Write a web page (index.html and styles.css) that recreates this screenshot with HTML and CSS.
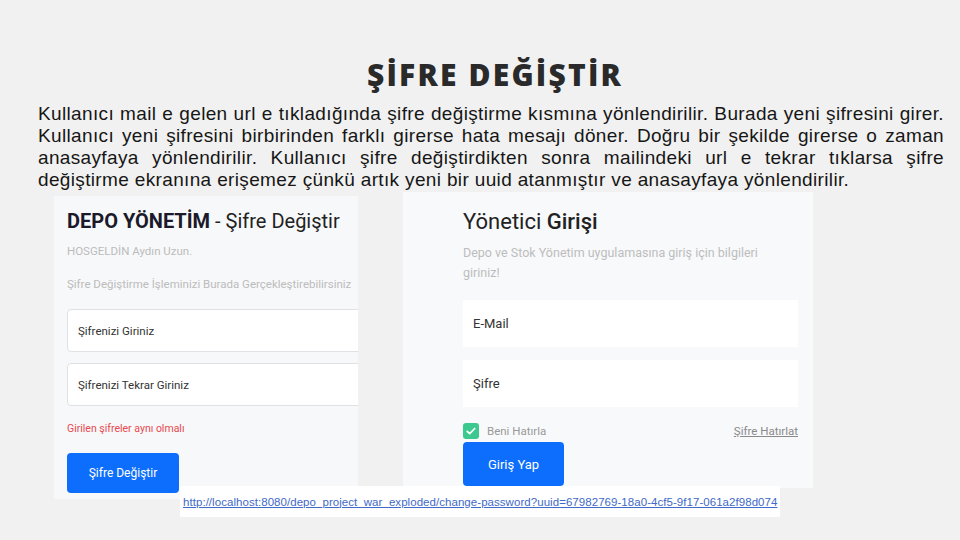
FILE: index.html
```html
<!DOCTYPE html>
<html lang="tr">
<head>
<meta charset="utf-8">
<link rel="stylesheet" href="styles.css">
</head>
<body>
<div class="slide">
  <h1 class="title">ŞİFRE DEĞİŞTİR</h1>
  <p class="desc">Kullanıcı mail e gelen url e tıkladığında şifre değiştirme kısmına yönlendirilir. Burada yeni şifresini girer. Kullanıcı yeni şifresini birbirinden farklı girerse hata mesajı döner. Doğru bir şekilde girerse o zaman anasayfaya yönlendirilir. Kullanıcı şifre değiştirdikten sonra mailindeki url e tekrar tıklarsa şifre değiştirme ekranına erişemez çünkü artık yeni bir uuid atanmıştır ve anasayfaya yönlendirilir.</p>
  <div class="shots">
    <div class="panel panel-left">
      <div class="pl-title"><b>DEPO YÖNETİM</b> - Şifre Değiştir</div>
      <div class="pl-muted pl-hello">HOSGELDİN Aydın Uzun.</div>
      <div class="pl-muted pl-info">Şifre Değiştirme İşleminizi Burada Gerçekleştirebilirsiniz</div>
      <div class="pl-input pl-input1">Şifrenizi Giriniz</div>
      <div class="pl-input pl-input2">Şifrenizi Tekrar Giriniz</div>
      <div class="pl-error">Girilen şifreler aynı olmalı</div>
      <div class="btn pl-btn">Şifre Değiştir</div>
    </div>
    <div class="panel panel-right">
      <div class="pr-title">Yönetici <b>Girişi</b></div>
      <div class="pr-sub">Depo ve Stok Yönetim uygulamasına giriş için bilgileri giriniz!</div>
      <div class="pr-input pr-input1">E-Mail</div>
      <div class="pr-input pr-input2">Şifre</div>
      <div class="pr-row">
        <span class="check"><svg width="16" height="16" viewBox="0 0 16 16"><rect width="16" height="16" rx="3" fill="#3cc98f"/><path d="M4.2 8.3l2.5 2.4 5-5.2" fill="none" stroke="#fff" stroke-width="1.7" stroke-linecap="round" stroke-linejoin="round"/></svg></span>
        <span class="remember">Beni Hatırla</span>
        <span class="forgot">Şifre Hatırlat</span>
      </div>
      <div class="btn pr-btn">Giriş Yap</div>
    </div>
    <div class="url"><span>http://localhost:8080/depo_project_war_exploded/change-password?uuid=67982769-18a0-4cf5-9f17-061a2f98d074</span></div>
  </div>
</div>
</body>
</html>
```
FILE: styles.css
```css
html, body { margin: 0; padding: 0; }
body { background: #f1f1f1; }
.slide {
  width: 960px;
  height: 540px;
  overflow: hidden;
  position: relative;
}
.title {
  margin: 0 0 9px;
  padding-top: 56px;
  padding-left: 30px;
  text-align: center;
  font-family: "Open Sans", sans-serif;
  font-weight: 800;
  font-size: 30px;
  line-height: 38px;
  letter-spacing: 2.2px;
  color: #2a2a2a;
}
.desc {
  margin: 0;
  padding: 0 16px 0 38px;
  font-family: "Liberation Sans", Arial, sans-serif;
  font-size: 19px;
  letter-spacing: 0.35px;
  line-height: 22px;
  text-align: justify;
  color: #161616;
}
.shots {
  position: relative;
  display: flex;
  align-items: flex-start;
  padding-left: 54px;
  gap: 45px;
  margin-top: 1px;
  font-family: Roboto, "Noto Sans", sans-serif;
}
.panel { overflow: hidden; box-sizing: border-box; }
.panel-left {
  width: 304px;
  height: 303px;
  margin-top: 4px;
  background: #f7f8fa;
  padding: 14px 0 0 13px;
}
.pl-title { font-size: 20px; line-height: 22px; color: #222; white-space: nowrap; }
.pl-title b { font-weight: 700; color: #1a1a2a; }
.pl-muted { font-size: 11.5px; color: #bcbcbc; white-space: nowrap; line-height: 14px; }
.pl-hello { margin-top: 12px; }
.pl-info { margin-top: 19px; }
.pl-input {
  width: 320px;
  height: 43px;
  box-sizing: border-box;
  background: #fff;
  border: 1px solid #dfe1e5;
  border-radius: 4px;
  padding: 0 10px;
  display: flex;
  align-items: center;
  font-size: 11.5px;
  color: #333;
}
.pl-input1 { margin-top: 18px; }
.pl-input2 { margin-top: 11px; }
.pl-error { font-size: 10.5px; color: #e8484f; margin-top: 16px; line-height: 14px; }
.btn {
  background: #0d6efd;
  color: #fff;
  border-radius: 4px;
  display: flex;
  align-items: center;
  justify-content: center;
}
.pl-btn { width: 112px; height: 40px; font-size: 12px; margin-top: 17px; }
.panel-right {
  width: 410px;
  height: 296px;
  background: #f8f9fb;
  padding: 16px 0 0 60px;
}
.pr-title { font-size: 22px; line-height: 28px; color: #222; }
.pr-title b { font-weight: 500; }
.pr-sub { width: 320px; font-size: 12.5px; line-height: 20px; color: #bdbdbd; margin-top: 7px; }
.pr-input {
  width: 335px;
  height: 47px;
  box-sizing: border-box;
  background: #fff;
  padding: 0 10px;
  display: flex;
  align-items: center;
  font-size: 13px;
  color: #333;
}
.pr-input1 { margin-top: 17px; }
.pr-input2 { margin-top: 13px; }
.pr-row {
  width: 335px;
  display: flex;
  align-items: center;
  margin-top: 16px;
  height: 16px;
  font-size: 11.5px;
}
.check { display: flex; width: 16px; height: 16px; }
.remember { margin-left: 8px; color: #999; }
.forgot { margin-left: auto; color: #8a8a8a; text-decoration: underline; }
.pr-btn { width: 101px; height: 44px; font-size: 13px; margin-top: 3px; }
.url {
  position: absolute;
  left: 180px;
  top: 294px;
  width: 600px;
  height: 31px;
  background: #fff;
  display: flex;
  align-items: center;
  padding-left: 3px;
  box-sizing: border-box;
}
.url span {
  font-family: "Liberation Sans", Arial, sans-serif;
  font-size: 11.5px;
  color: #4169c8;
  text-decoration: underline;
  white-space: nowrap;
  letter-spacing: 0.05px;
}
```
